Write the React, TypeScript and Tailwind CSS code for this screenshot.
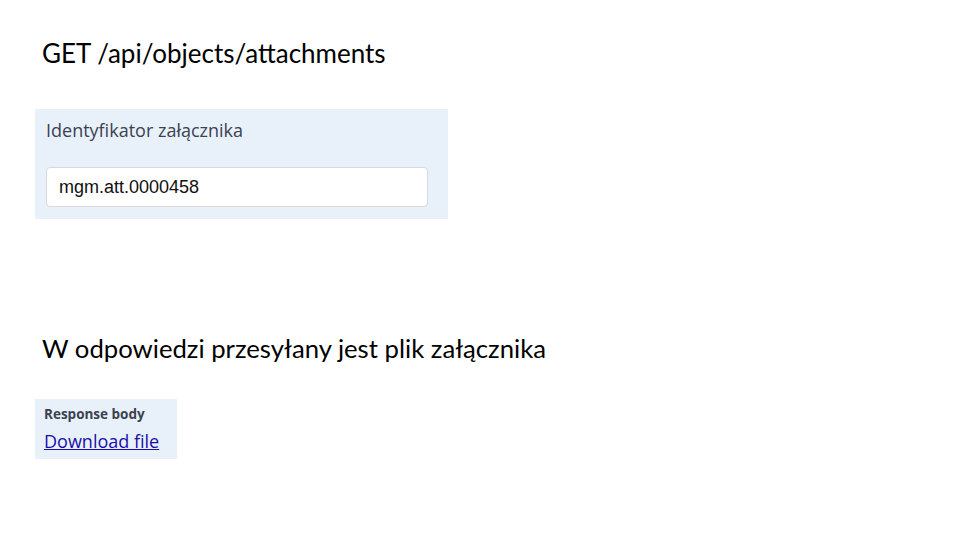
export default function App() {
  return (
    <div className="w-[960px] h-[540px] bg-white overflow-hidden relative">
      <div className="pl-[42px] pt-[37px] font-['Lato',sans-serif] text-[26px] leading-[32px] text-black">
        GET /api/objects/attachments
      </div>

      <div className="ml-[35px] mt-[40px] w-[413px] h-[110px] bg-[#e8f1f9] pt-[9px] pl-[11px]">
        <div className="font-['Open_Sans',sans-serif] text-[18px] leading-[25px] text-[#3b4151]">
          Identyfikator załącznika
        </div>
        <div className="mt-[24px] w-[382px] h-[40px] bg-white border border-[#d9d9d9] rounded-[4px] flex items-center pl-[12px] font-['Liberation_Sans',sans-serif] text-[18px] text-[#111]">
          mgm.att.0000458
        </div>
      </div>

      <div className="pl-[42px] mt-[113px] font-['Lato',sans-serif] text-[25.7px] leading-[32px] text-black">
        W odpowiedzi przesyłany jest plik załącznika
      </div>

      <div className="ml-[35px] mt-[35px] w-[142px] h-[60px] bg-[#e8f1f9] pt-[6px] pl-[9px]">
        <div className="font-['Open_Sans',sans-serif] font-bold text-[13.5px] leading-[19px] text-[#3b4151]">
          Response body
        </div>
        <a href="#" className="block mt-[5px] font-['Open_Sans',sans-serif] text-[18px] leading-[24px] text-[#1a0dab] underline">
          Download file
        </a>
      </div>
    </div>
  );
}
